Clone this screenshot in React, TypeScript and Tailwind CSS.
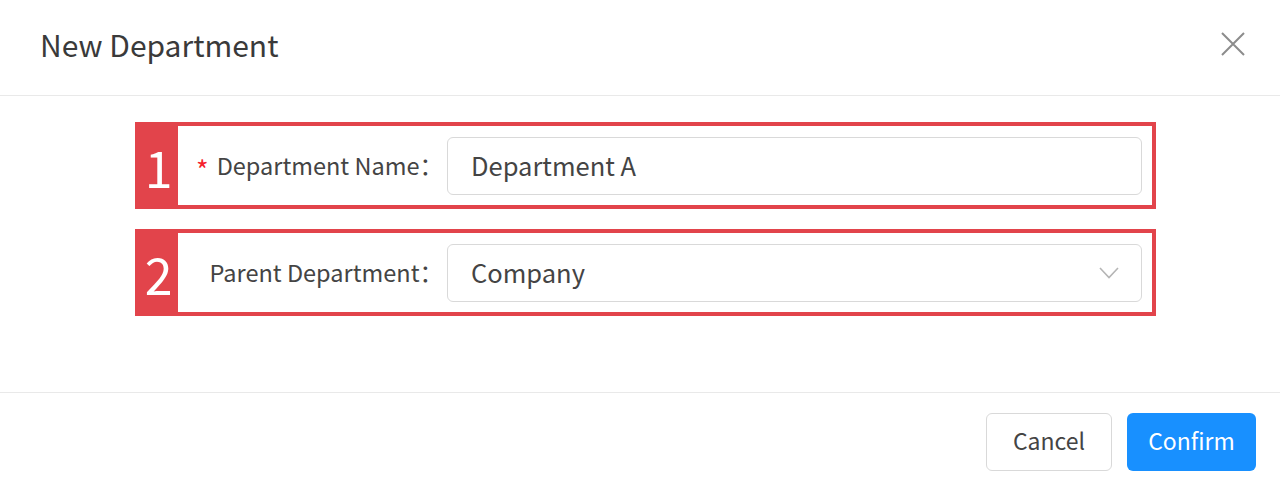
import React from "react";

const font = { fontFamily: '"Noto Sans CJK SC", "Noto Sans", sans-serif' };

function Field({
  index,
  label,
  required,
  children,
}: {
  index: string;
  label: string;
  required?: boolean;
  children: React.ReactNode;
}) {
  return (
    <div className="ml-[135px] flex h-[87px] w-[1021px] border-4 border-[#e2444b]">
      <div className="flex w-[39px] items-center justify-center bg-[#e2444b] text-[50px] leading-none text-white">
        {index}
      </div>
      <div className="flex flex-1 items-center bg-white">
        <div className="flex w-[265px] items-center justify-end text-[23.5px] leading-none text-[#444]">
          {required && (
            <span className="mr-[8px] translate-y-[4px] text-[27px] text-[#f5222d]">*</span>
          )}
          <span>{label}：</span>
        </div>
        <div className="ml-[4px] w-[695px]">{children}</div>
      </div>
    </div>
  );
}

export default function App() {
  return (
    <div className="h-[488px] w-[1280px] bg-white text-[#333]" style={font}>
      <header className="flex h-[96px] items-center justify-between border-b border-[#e9e9e9] px-10 pb-[8px]">
        <h1 className="text-[30px] leading-none text-[#3a3a3a]">New Department</h1>
        <button className="mr-[-6px] text-[#8c8c8c]" aria-label="Close">
          <svg width="26" height="26" viewBox="0 0 26 26" fill="none" stroke="currentColor" strokeWidth="2">
            <path d="M2 2 L24 24 M24 2 L2 24" />
          </svg>
        </button>
      </header>

      <main className="flex h-[296px] flex-col gap-[20px] pt-[26px]">
        <Field index="1" label="Department Name" required>
          <div className="flex h-[58px] items-center rounded-[6px] border border-[#d9d9d9] px-[23px] text-[25.5px] text-[#444]">
            Department A
          </div>
        </Field>
        <Field index="2" label="Parent Department">
          <div className="flex h-[58px] items-center justify-between rounded-[6px] border border-[#d9d9d9] pl-[23px] pr-[22px] text-[25.5px] text-[#444]">
            <span>Company</span>
            <svg width="20" height="12" viewBox="0 0 20 12" fill="none" stroke="#b5b5b5" strokeWidth="1.6">
              <path d="M1 1 L10 10.5 L19 1" />
            </svg>
          </div>
        </Field>
      </main>

      <footer className="flex justify-end gap-[15px] border-t border-[#e9e9e9] pr-[24px] pt-[20px]">
        <button className="h-[58px] w-[126px] rounded-[6px] border border-[#d9d9d9] bg-white pb-[3px] text-[23px] text-[#444]">
          Cancel
        </button>
        <button className="h-[58px] w-[129px] rounded-[6px] bg-[#1890ff] pb-[3px] text-[23px] text-white">
          Confirm
        </button>
      </footer>
    </div>
  );
}
